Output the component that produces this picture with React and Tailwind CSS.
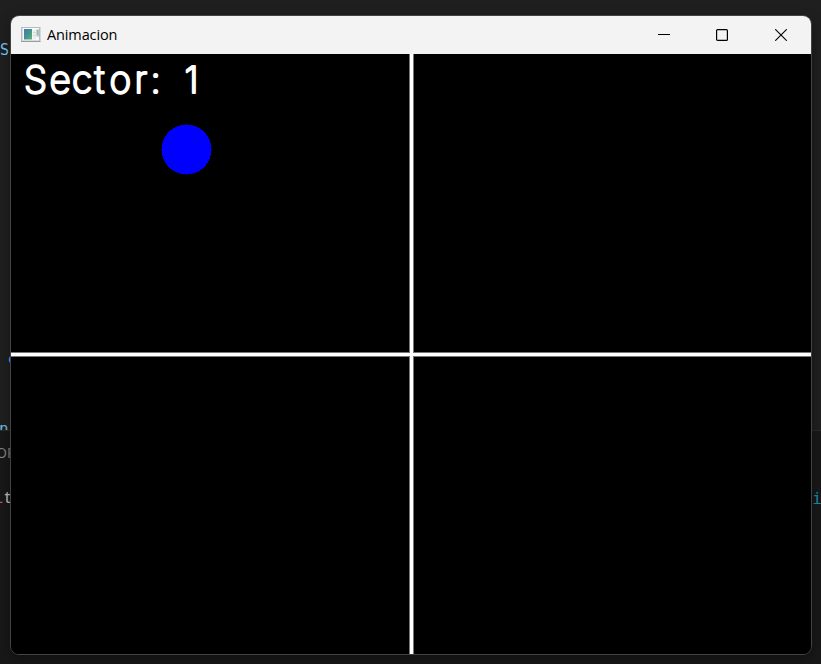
function AppIcon() {
  return (
    <svg className="h-4 w-5 shrink-0" viewBox="0 0 20 16">
      <defs>
        <linearGradient id="pane" x1="0" y1="0" x2="1" y2="1">
          <stop offset="0" stopColor="#4a78a8" />
          <stop offset="0.5" stopColor="#439390" />
          <stop offset="1" stopColor="#62b574" />
        </linearGradient>
      </defs>
      <rect x="0.75" y="0.25" width="18" height="14" fill="#fafafa" stroke="#b9bcc5" strokeWidth="1.5" />
      <path d="M0 14.5H19.5" stroke="#999ca6" strokeWidth="1.2" />
      <rect x="3" y="2" width="8" height="10.5" fill="url(#pane)" />
      <rect x="11.5" y="2.5" width="3.5" height="10" fill="#eceeee" />
      <rect x="15.5" y="2.5" width="2.3" height="7" fill="#8fbbb0" />
      <path d="M12 5.5h3M12 8.5h5" stroke="#d7dadd" />
    </svg>
  );
}

function TitleBar() {
  return (
    <header className="flex h-[38px] shrink-0 items-center bg-[#f3f3f3] pl-[10px] text-black">
      <AppIcon />
      <h1 className="ml-[6px] font-['Open_Sans','Noto_Sans',sans-serif] text-[14.5px] leading-5 tracking-[-0.12px]">Animacion</h1>
      <div className="ml-auto flex h-full">
        <button className="flex w-[58px] items-center justify-center" aria-label="Minimize">
          <svg className="size-3" viewBox="0 0 12 12"><path d="M0 5.5h12" stroke="#000" /></svg>
        </button>
        <button className="flex w-[58px] items-center justify-center" aria-label="Maximize">
          <svg className="size-3" viewBox="0 0 12 12"><rect x="0.6" y="0.6" width="10.8" height="10.8" rx="1" fill="none" stroke="#000" strokeWidth="1.2" /></svg>
        </button>
        <button className="flex w-[60px] items-center justify-center" aria-label="Close">
          <svg className="size-3" viewBox="0 0 12 12"><path d="M0.2 0.2l11.6 11.6M11.8 0.2L0.2 11.8" stroke="#000" strokeWidth="1.1" /></svg>
        </button>
      </div>
    </header>
  );
}

function Canvas() {
  return (
    <main className="relative flex h-[600px] w-[800px] flex-col bg-black">
      <svg className="h-[60px] w-[220px]" viewBox="0 0 220 60">
        <text
          x="13 38.5 61 83.5 98.5 123.5 139.5 160 173.5"
          y="39"
          className="font-['Inter','Open_Sans',sans-serif] text-[37px] font-extralight"
          fill="#fff"
          stroke="#fff"
          strokeWidth="2.2"
          strokeLinejoin="round"
        >
          {"Sector: 1"}
        </text>
      </svg>
      <svg className="mt-[10px] ml-[150px] size-[51px]" viewBox="0 0 51 51">
        <circle cx="25.5" cy="25.5" r="25" fill="#00f" shapeRendering="crispEdges" />
        <path d="M25 0h1v51h-1zM0 25h51v1h-51z" fill="#00f" />
      </svg>
      <div className="absolute inset-y-0 left-[398px] w-[5px] border-x border-[#777] bg-white" />
      <div className="absolute inset-x-0 top-[298px] h-[5px] border-y border-[#777] bg-white" />
      <div className="absolute top-[298px] left-[399px] h-[5px] w-[3px] bg-white" />
    </main>
  );
}

function Editor() {
  return (
    <div className="flex h-full flex-col font-['DejaVu_Sans_Mono',monospace] text-[16px] leading-5">
      <section className="flex h-[430px] flex-col overflow-hidden bg-[#1f1f1f]">
        <span className="mt-[40px] text-[15px] text-[#75c5ee]">S</span>
        <span className="mt-[289px] pl-[7.5px] text-[#4fb0f5]">c</span>
        <span className="mt-[50px] ml-[-1px] text-[#75b5dd]">n.</span>
      </section>
      <section className="flex flex-1 flex-col border-t border-[#2b2b2b] bg-[#181818]">
        <span className="mt-[12px] ml-[-4px] font-['Open_Sans',sans-serif] text-[14px] text-[#858585]">OR</span>
        <div className="mt-[26px] flex justify-between">
          <span className="ml-[-7px] font-['Liberation_Mono',monospace] text-[17px] text-[#bbb]"><span className="text-[#b55]">l</span>t</span>
          <span className="mr-[-1px] text-[#168ca8]">fi</span>
        </div>
      </section>
    </div>
  );
}

export default function App() {
  return (
    <div className="relative h-[664px] w-[821px] overflow-hidden">
      <Editor />
      <div className="absolute top-[15px] left-[10px] flex h-[640px] w-[802px] flex-col overflow-hidden rounded-[9px] border border-[#434343] bg-black shadow-[0_4px_12px_rgba(0,0,0,0.35)]">
        <TitleBar />
        <Canvas />
      </div>
    </div>
  );
}
